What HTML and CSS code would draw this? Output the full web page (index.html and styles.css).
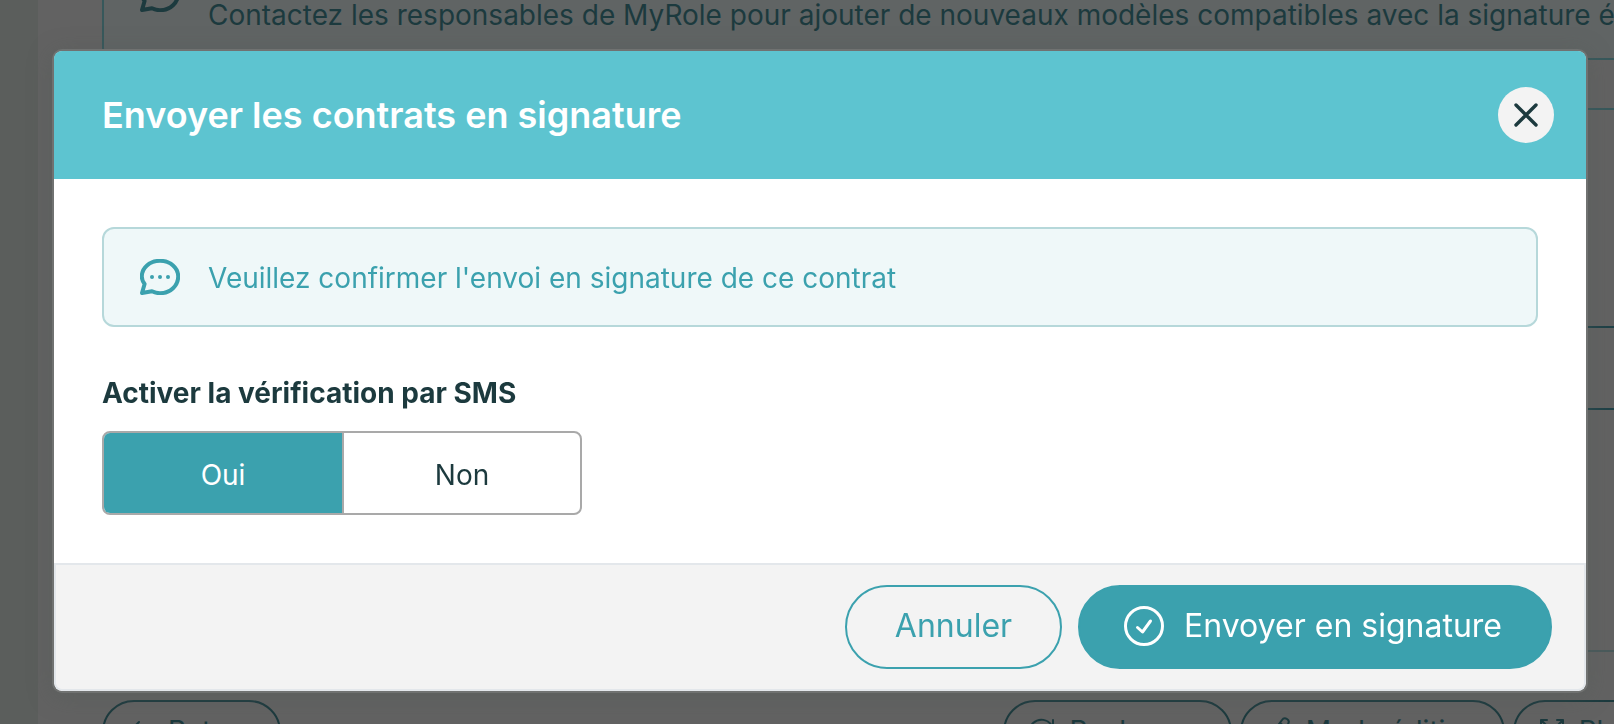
FILE: index.html
```html
<!DOCTYPE html>
<html lang="fr">
<head>
<meta charset="utf-8">
<title>Envoyer les contrats en signature</title>
<link rel="stylesheet" href="styles.css">
</head>
<body>
<div class="page" inert>
  <div class="sidebar"></div>
  <div class="content">
    <div class="notice page-notice">
      <svg class="icon-chat" viewBox="0 0 40 36" aria-hidden="true"><path d="M2 34 L4.600 25 C2.800 22.600 1.800 20 1.800 17.500 C1.800 9 9.500 1.800 20 1.800 C30.500 1.800 38.200 9 38.200 17.500 C38.200 26.500 30.500 34.200 20 34.200 C17 34.200 14.500 33.500 12 32.300 Z"/></svg>
      <p>Contactez les responsables de MyRole pour ajouter de nouveaux modèles compatibles avec la signature électronique</p>
    </div>
    <div class="panel panel-main"></div>
    <div class="panel panel-row"></div>
    <div class="panel panel-rest"></div>
    <div class="toolbar">
      <button class="btn btn-page btn-back" type="button"><svg class="icon-page" viewBox="0 0 28 28"><path d="M11 5 L2 14 L11 23 M2 14 H26"/></svg>Retour</button>
      <button class="btn btn-page" type="button"><svg class="icon-page" viewBox="0 0 28 28"><path d="M24 3 V10 H17 M23 9 A12 12 0 1 0 24 18"/></svg>Recharger</button>
      <button class="btn btn-page" type="button"><svg class="icon-page" viewBox="0 0 28 28"><path d="M3 25 L5 18 L16 3 Q18 0 21 2 Q24 4 22 7 L10 23 Z M14 6 L19 10"/></svg>Mode édition</button>
      <button class="btn btn-page" type="button"><svg class="icon-page" viewBox="0 0 28 28"><path d="M2 9 V3 H8 M2 3 L10 11 M18 3 H24 V9 M24 3 L16 11 M2 19 V25 H8 M2 25 L10 17 M24 19 V25 H18 M24 25 L16 17"/></svg>Plein écran</button>
    </div>
  </div>
</div>
<div class="overlay">
  <section class="modal" role="dialog" aria-modal="true" aria-labelledby="modal-title">
    <header class="modal-header">
      <h1 id="modal-title">Envoyer les contrats en signature</h1>
      <button class="close" type="button" aria-label="Fermer"><svg viewBox="0 0 24 24"><path d="M2 2 L22 22 M22 2 L2 22"/></svg></button>
    </header>
    <div class="modal-body">
      <div class="notice">
        <svg class="icon-chat" viewBox="0 0 40 36" aria-hidden="true"><path d="M2 34 L4.600 25 C2.800 22.600 1.800 20 1.800 17.500 C1.800 9 9.500 1.800 20 1.800 C30.500 1.800 38.200 9 38.200 17.500 C38.200 26.500 30.500 34.200 20 34.200 C17 34.200 14.500 33.500 12 32.300 Z"/><g class="dots"><circle cx="12" cy="18" r="2"/><circle cx="20" cy="18" r="2"/><circle cx="28" cy="18" r="2"/></g></svg>
        <p>Veuillez confirmer l'envoi en signature de ce contrat</p>
      </div>
      <fieldset class="field">
        <legend>Activer la vérification par SMS</legend>
        <div class="toggle">
          <label><input type="radio" name="sms" value="oui" checked><span>Oui</span></label>
          <label><input type="radio" name="sms" value="non"><span>Non</span></label>
        </div>
      </fieldset>
    </div>
    <footer class="modal-footer">
      <button class="btn" type="button">Annuler</button>
      <button class="btn btn-primary" type="button"><svg class="icon-check" viewBox="0 0 40 40" aria-hidden="true"><circle cx="20" cy="20" r="18.500"/><path d="M13.500 21.500 L18.500 26 L26.500 15"/></svg>Envoyer en signature</button>
    </footer>
  </section>
</div>
</body>
</html>
```

FILE: styles.css
```css
* { box-sizing: border-box; }
body { margin: 0; height: 100vh; overflow: hidden; background: #626262; font-family: Inter, "Liberation Sans", sans-serif; color: #1c3a3e; }
p, h1 { margin: 0; }
button { font-family: inherit; cursor: pointer; }
svg { flex: none; fill: none; stroke: currentColor; stroke-linecap: round; stroke-linejoin: round; }

.page { display: flex; height: 100vh; overflow: hidden; }
.sidebar { flex: none; width: 38px; background: #5b5e5c; }
.content { flex: 1; min-width: 0; padding-left: 64px; display: flex; flex-direction: column; }

.notice { display: flex; align-items: center; gap: 28px; min-height: 100px; padding: 0 36px; border: 2px solid #b6d8da; border-radius: 12px; background: #eff8f9; color: #3ba1ae; font-size: 28px; line-height: 40px; }
.notice p { padding-top: 2px; }
.icon-chat { width: 40px; height: 36px; stroke-width: 4; }
.dots { fill: currentColor; stroke: none; }
.page-notice { flex: none; min-height: 132px; margin-top: -72px; border-color: #37585b; background: #606464; color: #1c3a3e; white-space: nowrap; border-right: 0; border-radius: 12px 0 0 12px; }
.page-notice p { padding-top: 42px; }
.panel { flex: none; border-top: 2px solid #1f4147; }
.panel-main { margin-top: 48px; height: 218px; border-color: #37585b; }
.panel-row { height: 82px; }
.panel-rest { height: 244px; border-bottom: 2px solid #4a5a5b; }
.toolbar { display: flex; gap: 8px; margin: 48px -138px 0 0; white-space: nowrap; }

.btn { display: flex; flex: none; align-items: center; gap: 20px; height: 84px; padding: 0 48px 2px; border: 2px solid #3ba1ae; border-radius: 42px; background: transparent; color: #3ba1ae; font-size: 32px; line-height: 40px; }
.btn-primary { padding: 0 48px 2px 44px; background: #3ba1ae; color: #fff; }
.icon-check { width: 40px; height: 40px; stroke-width: 3; }
.btn-page { height: 64px; padding: 0 24px 2px; border-color: #1c3a3e; color: #1c3a3e; font-size: 28px; gap: 12px; }
.btn-back { margin-right: auto; }
.icon-page { width: 28px; height: 28px; stroke-width: 2; }

.overlay { position: fixed; inset: 0; padding: 49px 26px 0 52px; }
.modal { overflow: hidden; border: 2px solid #707271; border-radius: 10px; background: #fff; background-clip: padding-box; box-shadow: 0 4px 24px rgba(80, 90, 86, .4); }
.modal-header { display: flex; align-items: center; justify-content: space-between; height: 128px; padding: 0 32px 0 48px; background: #5dc4d0; color: #fff; }
.modal-header h1 { font-size: 36px; font-weight: 600; line-height: 44px; }
.close { display: grid; place-items: center; width: 56px; height: 56px; padding: 0; border: 0; border-radius: 50%; background: #f3f3f3; color: #1c3a3e; }
.close svg { width: 24px; height: 24px; stroke-width: 3.4; }
.modal-body { padding: 48px; }
.field { min-width: 0; margin: 48px 0 0; padding: 0; border: 0; }
.field legend { padding: 0; margin-bottom: 20px; font-size: 28px; font-weight: 700; line-height: 36px; }
.toggle { display: grid; grid-template-columns: 1fr 1fr; width: 480px; height: 84px; overflow: hidden; border: 2px solid #a9a9a9; border-radius: 8px; }
.toggle label { position: relative; display: grid; place-items: center; font-size: 28px; line-height: 40px; cursor: pointer; }
.toggle label + label { border-left: 2px solid #a9a9a9; }
.toggle input { position: absolute; inset: 0; width: 100%; height: 100%; margin: 0; appearance: none; }
.toggle span { position: relative; padding-top: 4px; }
.toggle input:checked { background: #3ba1ae; }
.toggle input:checked + span { color: #fff; }
.modal-footer { display: flex; justify-content: flex-end; align-items: center; gap: 16px; height: 128px; padding: 0 32px; border: 2px solid #e3e7eb; background: #f3f3f3; border-radius: 0 0 8px 8px; }
```
